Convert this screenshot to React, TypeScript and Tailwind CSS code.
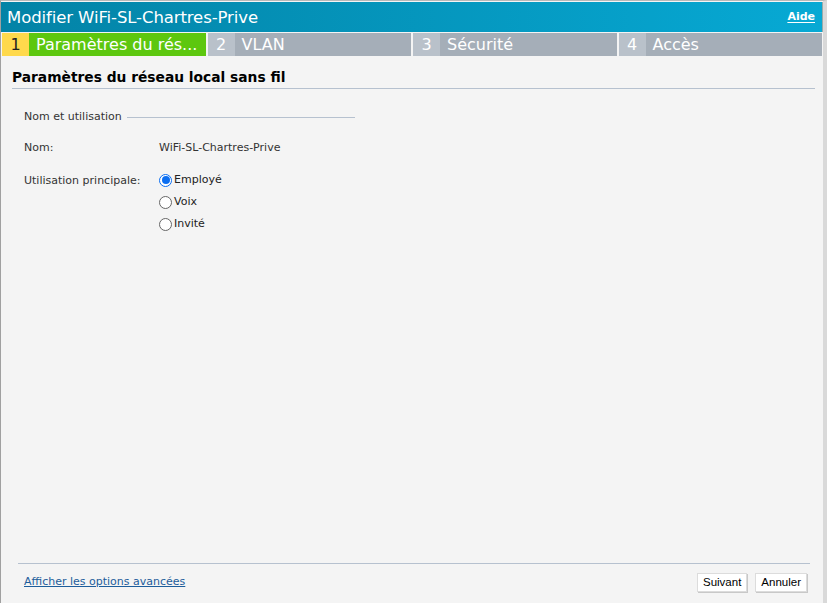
import React, { useState } from 'react'

const tabs = [
  { n: '1', label: 'Paramètres du rés...', active: true },
  { n: '2', label: 'VLAN', active: false },
  { n: '3', label: 'Sécurité', active: false },
  { n: '4', label: 'Accès', active: false },
]

const usages = ['Employé', 'Voix', 'Invité']

export default function App() {
  const [usage, setUsage] = useState('Employé')

  return (
    <div className="w-[827px] h-[603px] bg-[#f4f4f4] border-t border-l border-r-[4px] border-t-[#b9b9b9] border-l-[#a0a0a0] border-r-[#d9d9d9] flex flex-col font-['DejaVu_Sans',sans-serif] text-[#222]">
      {/* Header */}
      <div className="mt-px h-[30px] bg-gradient-to-r from-[#0383a6] to-[#07a9d4] flex items-center justify-between pl-[6px] pr-[7px] border-r border-[#9aa]">
        <span className="text-white text-[16.5px] tracking-[-0.1px] pt-[2px]">Modifier WiFi-SL-Chartres-Prive</span>
        <a href="#" className="text-white text-[11px] font-semibold underline underline-offset-2">Aide</a>
      </div>

      {/* Steps */}
      <div className="flex gap-[2px] pl-px pr-px mt-px h-[23px]">
        {tabs.map((t) => (
          <div key={t.n} className="flex flex-1 h-full">
            <div
              className={`w-[27px] flex items-center justify-center text-[16px] ${
                t.active ? 'bg-[#ffd94c] text-[#222]' : 'bg-[#b9c1ca] text-white'
              }`}
            >
              {t.n}
            </div>
            <div
              className={`flex-1 flex items-center pl-[7px] text-[16px] text-white whitespace-nowrap ${
                t.active ? 'bg-[#5dc70f]' : 'bg-[#a5aeb8]'
              }`}
            >
              {t.label}
            </div>
          </div>
        ))}
      </div>

      {/* Body */}
      <div className="flex-1 flex flex-col px-[11px]">
        <h2 className="mt-[13px] text-[13.8px] leading-[17px] font-bold text-black pb-[2px] border-b border-[#b6c1cf] mr-[-3px]">
          Paramètres du réseau local sans fil
        </h2>

        <div className="pl-[12px] mt-[20px] text-[11px]">
          <div className="flex items-center w-[331px]">
            <span className="text-[#333]">Nom et utilisation</span>
            <div className="flex-1 h-px bg-[#b6c1cf] ml-[5px]" />
          </div>

          <div className="flex mt-[14px]">
            <span className="w-[135px] text-[#333]">Nom:</span>
            <span className="text-[#333]">WiFi-SL-Chartres-Prive</span>
          </div>

          <div className="flex mt-[16px]">
            <span className="w-[135px] text-[#333] pt-[1px]">Utilisation principale:</span>
            <div className="flex flex-col gap-[5.5px]">
              {usages.map((u) => (
                <label key={u} className="flex items-center gap-[2px] cursor-pointer text-[#222]">
                  <span
                    className={`w-[13px] h-[13px] rounded-full flex items-center justify-center bg-white ${
                      usage === u ? 'border border-[#0b6ef1]' : 'border border-[#666]'
                    }`}
                    onClick={() => setUsage(u)}
                  >
                    {usage === u && <span className="w-[8px] h-[8px] rounded-full bg-[#0b6ef1]" />}
                  </span>
                  {u}
                </label>
              ))}
            </div>
          </div>
        </div>

        <div className="flex-1" />

        {/* Footer */}
        <div className="ml-[6px] mr-[2px] border-t border-[#b6c1cf]" />
        <div className="flex items-center justify-between pl-[12px] pr-[5px] h-[36px] mb-[3px]">
          <a href="#" className="text-[11px] text-[#1d5d9b] underline">
            Afficher les options avancées
          </a>
          <div className="flex gap-[8px]">
            <button className="h-[19px] px-[5px] bg-white border border-[#dcdcdc] shadow-[1px_1px_0_#c8c8c8] text-[11.5px] text-black font-['Liberation_Sans_Narrow','Liberation_Sans',sans-serif]">
              Suivant
            </button>
            <button className="h-[19px] px-[5px] bg-white border border-[#dcdcdc] shadow-[1px_1px_0_#c8c8c8] text-[11.5px] text-black font-['Liberation_Sans_Narrow','Liberation_Sans',sans-serif]">
              Annuler
            </button>
          </div>
        </div>
      </div>
    </div>
  )
}
